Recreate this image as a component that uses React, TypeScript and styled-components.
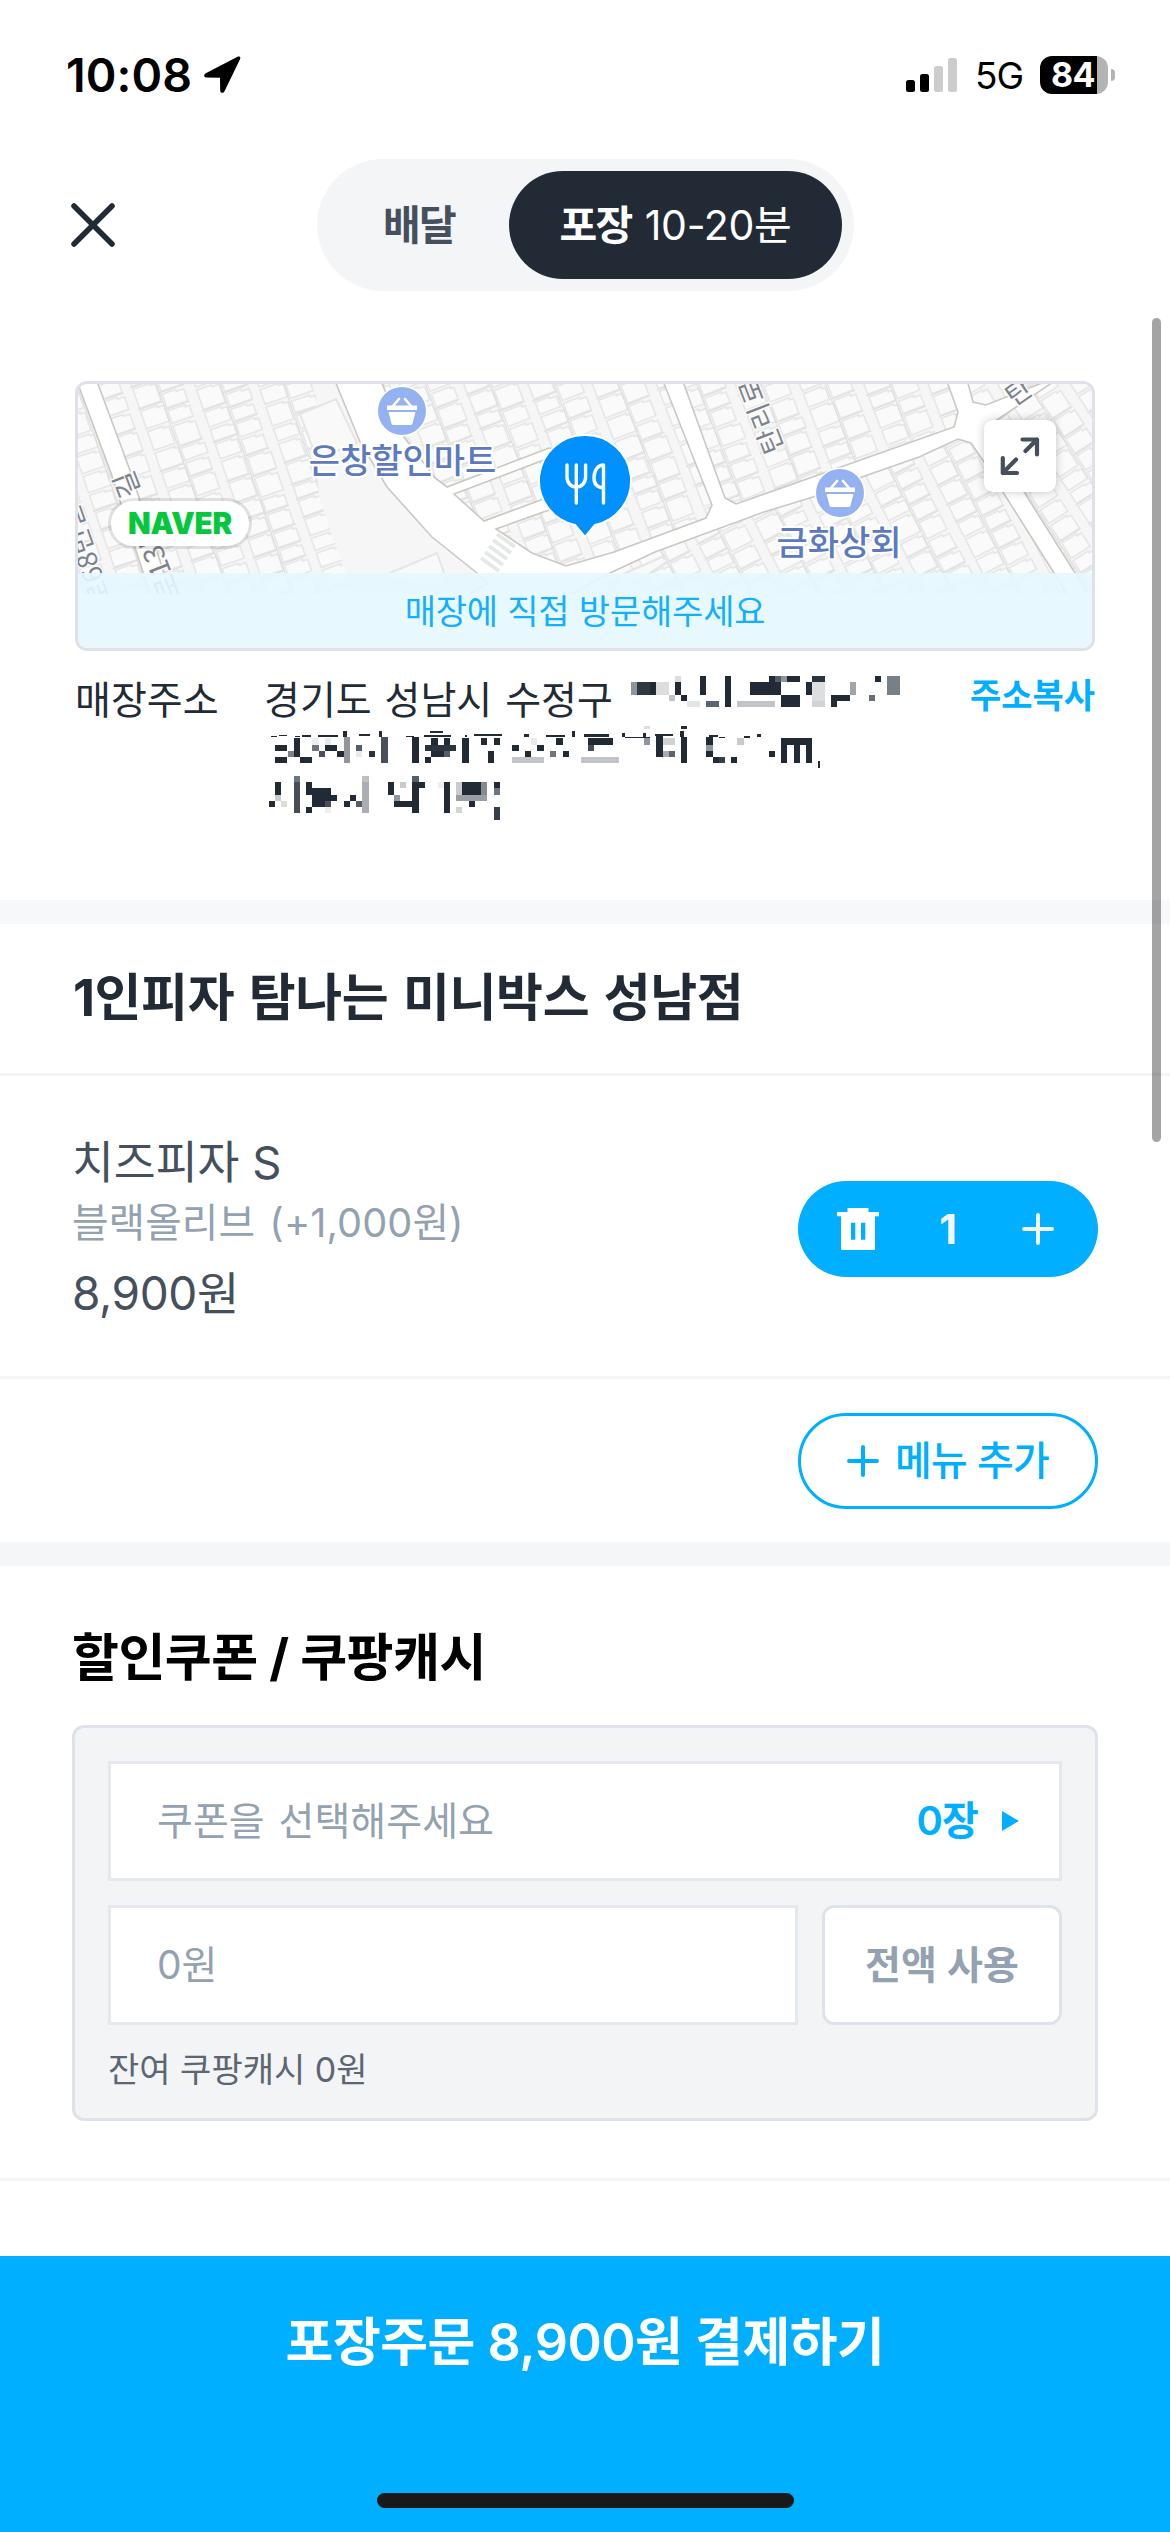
import React from 'react';
import styled, { createGlobalStyle, css } from 'styled-components';

const sky = '#00afff';
const ink = '#222b35';
const slate = '#464f5c';
const muted = '#93a1b0';

const GlobalStyle = createGlobalStyle`
  * { box-sizing: border-box; }
  body {
    margin: 0;
    background: #fff;
    font-family: Inter, "Noto Sans CJK KR", sans-serif;
    color: ${ink};
  }
  button { font-family: inherit; margin: 0; padding: 0; border: 0; background: none; color: inherit; }
  h2, p { margin: 0; }
  svg { display: block; flex: none; }
`;

const Screen = styled.main`
  position: relative;
  display: flex;
  flex-direction: column;
  width: 1170px;
  height: 2532px;
  overflow: hidden;
  background: #fff;
`;

const StatusBar = styled.div`
  display: flex;
  align-items: center;
  justify-content: space-between;
  height: 149px;
  padding: 0 55px 0 66px;
  color: #000;
`;

const StatusGroup = styled.div<{ $gap: number }>`
  display: flex;
  align-items: center;
  gap: ${p => p.$gap}px;
`;

const Clock = styled.span`
  font-size: 46.5px;
  font-weight: 600;
  line-height: 60px;
  letter-spacing: 0.1px;
`;

const Network = styled.span`
  font-size: 37px;
  line-height: 44px;
  letter-spacing: -1px;
  padding-top: 3px;
`;

const Battery = styled.div`
  display: flex;
  align-items: center;
  gap: 3px;
`;

const BatteryBody = styled.div`
  width: 68px;
  height: 38px;
  padding-right: 11px;
  border-radius: 12px;
  background: linear-gradient(to right, #000 57px, #b3b3b3 57px);
  color: #fff;
  font-size: 34px;
  font-weight: 700;
  line-height: 37px;
  letter-spacing: -0.6px;
  text-align: center;
  padding-left: 9px;
`;

const BatteryNub = styled.div`
  width: 4px;
  height: 12px;
  border-radius: 0 4px 4px 0;
  background: #b3b3b3;
`;

const Header = styled.header`
  display: grid;
  grid-template-columns: 317px 537px 1fr;
  align-items: center;
  height: 152px;
`;

const CloseButton = styled.button`
  padding-left: 70px;
`;

const Segmented = styled.div`
  display: flex;
  height: 132px;
  padding: 12px;
  border-radius: 66px;
  background: #f3f5f7;
`;

const Segment = styled.button<{ $active?: boolean }>`
  display: flex;
  align-items: center;
  justify-content: center;
  gap: 13px;
  width: ${p => (p.$active ? 333 : 180)}px;
  padding-bottom: 1px;
  border-radius: 54px;
  font-size: 41px;
  font-weight: 700;
  line-height: 60px;
  letter-spacing: -1.6px;
  color: ${p => (p.$active ? '#fff' : slate)};
  ${p => p.$active && css`background: ${ink};`}
`;

const Eta = styled.span`
  font-weight: 400;
  letter-spacing: -0.3px;
`;

const Pickup = styled.section`
  height: 599px;
  padding: 80px 75px 0;
`;

const MapCard = styled.div`
  position: relative;
  display: flex;
  flex-direction: column;
  justify-content: flex-end;
  height: 270px;
  border: 3px solid #dee2e8;
  border-radius: 12px;
  overflow: hidden;
  background: #fff;
`;

const MapCanvas = styled.svg`
  position: absolute;
  top: 0;
  left: 0;
`;

const MapNotice = styled.p`
  position: relative;
  height: 75px;
  background: rgba(230, 247, 255, 0.9);
  color: #13b0ff;
  font-size: 34px;
  line-height: 78px;
  letter-spacing: -0.2px;
  text-align: center;
`;

const NaverBadge = styled.div`
  position: absolute;
  left: 30px;
  top: 114px;
  width: 144px;
  height: 51px;
  border: 3px solid rgba(0, 0, 0, 0.1);
  border-radius: 26px;
  background: #fff;
  background-clip: padding-box;
  color: #03c83c;
  font-size: 29.5px;
  font-weight: 900;
  line-height: 45px;
  letter-spacing: -0.2px;
  text-align: center;
`;

const ExpandButton = styled.button`
  position: absolute;
  left: 906px;
  top: 36px;
  display: grid;
  place-items: center;
  width: 72px;
  height: 72px;
  border-radius: 9px;
  background: #fff;
  box-shadow: 0 0 10px rgba(0, 0, 0, 0.22);
`;

const AddressRow = styled.div`
  position: relative;
  display: grid;
  grid-template-columns: 189px 1fr auto;
  padding-top: 24px;
  font-size: 39px;
  line-height: 50px;
  word-spacing: 2px;
`;

const CopyButton = styled.button`
  height: 42px;
  color: ${sky};
  font-size: 34px;
  font-weight: 700;
  line-height: 42px;
`;

const Mosaic = styled.svg`
  position: absolute;
  left: -75px;
  top: -1px;
`;

const Band = styled.div<{ $tone: string }>`
  height: 24px;
  background: ${p => p.$tone};
`;

const Rule = styled.div`
  height: 3px;
  background: #f4f5f7;
`;

const StoreName = styled.h2`
  height: 149px;
  padding-left: 73px;
  font-size: 51px;
  font-weight: 700;
  line-height: 147px;
  letter-spacing: -0.4px;
  word-spacing: 3px;
`;

const CartItem = styled.section`
  display: flex;
  justify-content: space-between;
  height: 300px;
  padding: 57px 72px 0 72px;
`;

const ItemText = styled.div`
  display: flex;
  flex-direction: column;
  color: ${slate};
  line-height: 60px;
`;

const ItemName = styled.p`
  font-size: 45.5px;
`;

const ItemOption = styled.p`
  margin: 0 0 10px;
  font-size: 39.7px;
  letter-spacing: 0.1px;
  word-spacing: 3px;
  color: ${muted};
`;

const ItemPrice = styled.p`
  font-size: 46px;
  letter-spacing: -0.4px;
`;

const Stepper = styled.div`
  display: grid;
  grid-template-columns: 120px 60px 120px;
  align-items: center;
  justify-items: center;
  width: 300px;
  height: 96px;
  margin-top: 48px;
  border-radius: 48px;
  background: ${sky};
  color: #f3f5f8;
  font-size: 41px;
  font-weight: 700;
`;

const AddRow = styled.div`
  display: flex;
  justify-content: flex-end;
  height: 163px;
  padding: 34px 72px 0 0;
`;

const AddButton = styled.button`
  display: flex;
  align-items: center;
  justify-content: center;
  gap: 16px;
  width: 300px;
  height: 96px;
  border: 3px solid ${sky};
  border-radius: 48px;
  color: ${sky};
  font-size: 40px;
  font-weight: 500;
  line-height: 60px;
  letter-spacing: -0.8px;
`;

const Coupons = styled.section`
  height: 612px;
  padding: 56px 72px 0;
`;

const CouponTitle = styled.h2`
  margin-bottom: 31px;
  color: #000;
  font-size: 51px;
  font-weight: 700;
  line-height: 72px;
  letter-spacing: -0.5px;
`;

const CouponPanel = styled.div`
  display: grid;
  grid-template-columns: 1fr 240px;
  grid-template-rows: 120px 120px 44px;
  gap: 24px;
  height: 396px;
  padding: 33px;
  border: 3px solid #dfe2e8;
  border-radius: 12px;
  background: #f3f4f6;
`;

const Field = styled.div<{ $wide?: boolean }>`
  display: flex;
  align-items: center;
  justify-content: space-between;
  grid-column: ${p => (p.$wide ? '1 / -1' : 'auto')};
  padding: 0 40px 0 46px;
  border: 3px solid #e5e8ed;
  background: #fff;
  color: ${muted};
  font-size: 39px;
  line-height: 60px;
  word-spacing: 3px;
`;

const CouponCount = styled.span`
  display: flex;
  align-items: center;
  gap: 24px;
  color: ${sky};
  font-size: 40px;
  font-weight: 600;
  letter-spacing: -0.8px;
`;

const UseAll = styled.button`
  border: 3px solid #dfe2e8;
  border-radius: 12px;
  background: #fff;
  color: ${muted};
  font-size: 39px;
  font-weight: 700;
  line-height: 60px;
  word-spacing: 1px;
`;

const Balance = styled.p`
  margin-top: -1px;
  color: #5c6673;
  font-size: 34px;
  line-height: 44px;
`;

const PayBar = styled.footer`
  display: flex;
  flex-direction: column;
  align-items: center;
  height: 276px;
  margin-top: auto;
  padding-top: 51px;
  background: ${sky};
`;

const PayButton = styled.button`
  color: #fff;
  font-size: 52px;
  font-weight: 600;
  line-height: 72px;
  letter-spacing: -0.5px;
`;

const HomeIndicator = styled.div`
  width: 417px;
  height: 15px;
  margin-top: 114px;
  border-radius: 8px;
  background: #191919;
`;

const ScrollThumb = styled.div`
  position: absolute;
  left: 1152px;
  top: 318px;
  width: 9px;
  height: 824px;
  border-radius: 5px;
  background: rgba(0, 0, 0, 0.355);
`;

/* Map geometry: coordinates share one 1014 x 210 window starting at 78,384 */
interface Block {
  id: string;
  outline: string;
  lots?: string;
  angle: number;
}

const blocks: Block[] = [
  { id: 'west', outline: '70,376 78,384 111,473 150,594 150,600 70,600', angle: -19 },
  {
    id: 'midwest',
    outline: '95,376 131,473 171,594 171,600 460,600 488,583 477,573 432,537 387,487 360,442 333,376',
    lots: '97,376 318,376 312,440 320,500 346,573 350,594 171,600',
    angle: -19,
  },
  {
    id: 'centre',
    outline:
      '379,376 404,437 435,478 447,487 549,448 570,450 549,458 454,494 484,521 549,497 570,490 549,510 496,529 532,553 566,566 614,552 706,518 712,505 661,376',
    angle: -21,
  },
  { id: 'north', outline: '681,376 725,498 736,504 954,427 958,412 945,376', angle: -21 },
  { id: 'corner', outline: '966,376 973,402 986,405 1060,376', angle: -30 },
  { id: 'south', outline: '560,600 610,573 655,552 764,512 813,497 862,477 919,457 958,439 971,443 984,462 1054,573 1070,600', angle: -27 },
  { id: 'east', outline: '994,422 1062,376 1100,376 1100,600 1092,600 1024,492', angle: -33 },
];

function lotPaths(seed: number): { lots: string; seams: string } {
  let s = seed;
  const rnd = () => {
    s = (s * 16807) % 2147483647;
    return s / 2147483647;
  };
  let lots = '';
  let seams = '';
  for (let x = -420; x < 420; x += 60) {
    for (let side = 0; side < 2; side += 1) {
      const left = x + side * 26;
      let y = -420 + rnd() * 12;
      while (y < 420) {
        const h = 15 + rnd() * 9;
        const w = 22 + rnd() * 2.5;
        const notch = 3 + rnd() * 5;
        lots += `M${left + 1} ${y + 1}h${w - notch}v2h${notch}v${h - 5}h${-w}z`;
        if (rnd() > 0.45) seams += `M${left - 1} ${y - 1}h26`;
        y += h;
      }
    }
    seams += `M${x + 25} -420v840`;
  }
  return { lots, seams };
}

function Basket({ x, y }: { x: number; y: number }) {
  return (
    <g transform={`translate(${x} ${y})`}>
      <circle r="25.5" fill="#fff" />
      <circle r="24" fill="#94b1f1" />
      <path d="M-15-5.500h30v4.500h-30zM-13.500 1h27l-3 11.500q-.4 1.500-2 1.500h-17q-1.600 0-2-1.500z" fill="#fff" />
      <path d="M-9-5l6-7M9-5l-6-7" stroke="#fff" strokeWidth="2.600" fill="none" strokeLinecap="round" />
    </g>
  );
}

function StreetMap() {
  return (
    <MapCanvas width="1014" height="210" viewBox="78 384 1014 210" fontFamily='"Noto Sans CJK KR", sans-serif'>
      {blocks.map((b, i) => {
        const { lots, seams } = lotPaths(97 + i * 531);
        const [cx, cy] = [[90, 500], [230, 490], [560, 470], [820, 440], [1000, 390], [830, 540], [1060, 480]][i];
        return (
          <g key={b.id}>
            <clipPath id={b.id}>
              <polygon points={b.lots || b.outline} />
            </clipPath>
            <polygon points={b.outline} fill="#f6f6f6" />
            <g clipPath={`url(#${b.id})`}>
              <g transform={`translate(${cx} ${cy}) rotate(${b.angle})`}>
                <path d={lots} fill="#fafafa" stroke="#e7e7e7" strokeWidth="1.700" />
                <path d={seams} fill="none" stroke="#dcdcdc" strokeWidth="0.900" />
              </g>
            </g>
            <polygon points={b.outline} fill="none" stroke="#cbc8c0" strokeWidth="1.600" />
          </g>
        );
      })}
      <path d="M300 414l36-15 21 44-40 16zM383 576l54-23 12 34M614 578l48-21 6 4-36 24" fill="#f9f9f9" stroke="#e5e5e5" strokeWidth="2" />
      <path d="M497 534l18 13M493 540l18 13M489 546l18 13M485 552l18 13M481 558l18 13" stroke="#e4e8e7" strokeWidth="4" />

      <g fill="#7d838b" stroke="#fafafa" strokeWidth="3" paintOrder="stroke" fontSize="27">
        <text transform="translate(784 449) rotate(-111)" letterSpacing="2">탄리로</text>
        <text transform="translate(181 596) rotate(-111)" fontSize="28">로13번</text>
        <text transform="translate(141 493) rotate(-111)" fontSize="28">길</text>
        <text transform="translate(112 602) rotate(-109)">로68번길</text>
        <text transform="translate(1014 407) rotate(-35)">탄</text>
      </g>

      <g fill="#5c7abf" stroke="#fff" strokeWidth="4" paintOrder="stroke" fontSize="34" fontWeight="500" textAnchor="middle">
        <text x="402.500" y="473">은창할인마트</text>
        <text x="839" y="555">금화상회</text>
      </g>
      <Basket x={402} y={411} />
      <Basket x={840} y={493} />

      <path d="M585 435a45.500 45.500 0 0 1 10 90L585 537l-10-12a45.500 45.500 0 0 1 10-90z" fill="#0091ff" stroke="#fff" strokeWidth="2" />
      <g stroke="#fff" strokeWidth="3.400" fill="none" strokeLinecap="round" strokeLinejoin="round">
        <path d="M567 465v12c0 6 4 10 9.300 10s9.300-4 9.300-10v-12M576.300 465v38" />
        <path d="M603.500 503v-38c-6 0-9.500 6-9.500 13 0 6 3.500 9.500 9.500 10" />
      </g>
    </MapCanvas>
  );
}

/* Pixelated redaction over the private part of the address: x, y, w, h, tone */
type Cell = [number, number, number, number, string?];

const leftCells: Cell[] = [
  [592, 257, 15, 4], [612, 255, 24, 4], [657, 257, 15, 4], [678, 255, 26, 5], [722, 255, 55, 5], [793, 243, 10, 19],
  [837, 251, 30, 6], [892, 243, 10, 19], [970, 258, 20, 4], [1037, 244, 34, 6], [1020, 256, 75, 6], [1133, 254, 7, 8],
  [1160, 251, 77, 6], [1300, 253, 12, 9], [1360, 255, 55, 6], [1433, 243, 8, 19], [1468, 253, 70, 8],
  [602, 285, 34, 18], [655, 264, 17, 57], [672, 321, 34, 18], [602, 321, 34, 18], [637, 303, 18, 18, '#7c8088'],
  [706, 264, 18, 21, '#eee'], [742, 264, 17, 21, '#e8ebeb'], [706, 285, 18, 18, '#6f757d'], [724, 303, 18, 18, '#4a515b'],
  [742, 285, 34, 18], [776, 303, 19, 18], [795, 262, 17, 77, '#91979d'], [829, 285, 17, 18, '#555d66'],
  [829, 303, 17, 18, '#e8eaeb'], [865, 303, 17, 18, '#2c353f'], [899, 262, 19, 77, '#4a515b'], [986, 262, 19, 77],
  [1022, 285, 87, 18, '#2c353f'], [1039, 264, 18, 21], [1074, 264, 18, 21], [1039, 303, 36, 18], [1075, 303, 17, 18, '#555d66'],
  [1022, 321, 17, 18], [1126, 264, 19, 75], [1179, 264, 17, 21], [1215, 264, 17, 21], [1197, 303, 18, 36],
  [1319, 264, 17, 21, '#e8eaeb'], [1266, 285, 19, 18], [1336, 285, 19, 18], [1302, 303, 17, 18], [1266, 321, 89, 18, '#c0c4c8'],
  [1389, 264, 19, 21], [1372, 303, 17, 18, '#6f757d'], [1408, 303, 17, 18], [1478, 264, 70, 21], [1478, 285, 17, 18, '#464f59'],
  [1459, 321, 106, 18, '#c0c4c8'],
  [585, 453, 17, 18], [602, 396, 17, 39], [602, 435, 17, 18, '#ccc'], [619, 453, 17, 18, '#ddd'], [655, 378, 17, 18, '#6f757d'],
  [655, 396, 17, 93, '#464f59'], [689, 396, 17, 39], [706, 414, 53, 39], [759, 435, 17, 18], [706, 453, 36, 18],
  [742, 453, 17, 18, '#464f59'], [689, 471, 17, 18], [742, 471, 17, 18, '#eee'], [795, 453, 18, 18], [812, 435, 17, 18],
  [829, 453, 17, 18, '#555d66'], [846, 378, 19, 18, '#bcc0c4'], [846, 396, 19, 93, '#aaaeb3'], [918, 396, 17, 39],
  [935, 435, 17, 18, '#91979d'], [952, 396, 17, 18, '#c8cacc'], [935, 453, 70, 18], [986, 378, 19, 18, '#555d66'],
  [986, 396, 19, 93], [1005, 396, 17, 18], [1057, 396, 17, 18, '#eee'], [1075, 396, 17, 93], [1109, 396, 17, 39, '#c8cacc'],
  [1126, 396, 53, 39], [1179, 396, 17, 39, '#858b93'], [1109, 435, 87, 18, '#999fa5'], [1145, 453, 17, 18],
  [1109, 471, 17, 18, '#d3d4d5'], [1215, 396, 17, 18], [1215, 414, 17, 21, '#6f757d'], [1215, 471, 17, 39, '#363f49'],
];

const rightCells: Cell[] = [
  [85, 96, 17, 39, '#8f959b'], [102, 96, 36, 39, '#303942'], [138, 96, 16, 39], [154, 96, 36, 39, '#ddd'], [206, 78, 17, 18, '#ddd'],
  [206, 96, 17, 39], [190, 135, 16, 18, '#c0c4c8'], [223, 135, 16, 18], [239, 153, 36, 18, '#e2e4e5'], [275, 78, 17, 57],
  [292, 153, 35, 18, '#5c646d'], [344, 78, 16, 93], [413, 96, 85, 39], [377, 153, 104, 18, '#c0c4c8'], [465, 78, 16, 18],
  [481, 78, 17, 18, '#555d66'], [498, 78, 16, 18, '#8f959b'], [514, 78, 36, 18], [498, 135, 52, 36], [567, 96, 16, 39],
  [583, 78, 36, 18, '#2c353f'], [583, 96, 36, 57, '#dddedf'], [583, 153, 36, 18, '#d0d2d4'], [688, 96, 16, 39, '#9fa5aa'],
  [635, 135, 53, 18], [635, 153, 17, 18], [756, 78, 17, 18], [740, 135, 16, 18, '#666e78'], [790, 78, 35, 57, '#777f87'],
  [0, 264, 36, 21], [0, 321, 52, 18, '#c0c4c8'], [121, 228, 17, 9, '#ddd'], [121, 264, 17, 21, '#8f959b'], [152, 252, 48, 6],
  [154, 258, 19, 63], [173, 264, 33, 21, '#d0d2d4'], [173, 303, 17, 18, '#aaa'], [190, 303, 16, 18, '#5c646d'],
  [223, 228, 16, 9], [223, 262, 16, 77], [221, 243, 9, 19], [60, 248, 8, 13], [70, 261, 68, 3], [119, 248, 8, 13],
  [292, 262, 19, 23], [292, 285, 19, 18, '#8f959b'], [292, 303, 19, 18], [311, 321, 16, 18], [327, 321, 17, 18, '#363f49'],
  [360, 321, 17, 18], [300, 255, 25, 6], [327, 261, 17, 3], [377, 264, 19, 21, '#c8cacc'], [396, 257, 16, 6], [433, 252, 10, 9],
  [465, 303, 16, 18], [498, 264, 85, 21], [498, 285, 16, 54], [534, 285, 16, 54], [567, 285, 16, 54], [600, 333, 5, 22],
];

function Cells({ data }: { data: Cell[] }) {
  return (
    <>
      {data.map(([x, y, w, h, tone], i) => (
        <rect key={i} x={x} y={y} width={w} height={h} fill={tone || ink} />
      ))}
    </>
  );
}

function Plus() {
  return (
    <svg width="32" height="32" viewBox="0 0 32 32">
      <path d="M16 2v28M2 16h28" stroke="currentColor" strokeWidth="4" strokeLinecap="round" />
    </svg>
  );
}

export default function App() {
  return (
    <>
      <GlobalStyle />
      <Screen>
        <StatusBar>
          <StatusGroup $gap={12}>
            <Clock>10:08</Clock>
            <svg width="37" height="37" viewBox="0 0 37 37">
              <path d="M33.500.800L1.800 17.200c-2.600 1.400-2 4.300.900 4.300L16 21.700l.2 12.800c0 2.700 3.200 3.200 4.300.8L36 3.200C37 1 35.500-.200 33.500.800z" fill="#000" />
            </svg>
          </StatusGroup>
          <StatusGroup $gap={17}>
            <svg width="52" height="36" viewBox="0 0 52 36">
              <rect x="0" y="23" width="9" height="12" rx="2.500" />
              <rect x="14" y="17" width="9" height="18" rx="2.500" />
              <rect x="28" y="9" width="9" height="26" rx="2.500" fill="#ccc" />
              <rect x="42" y="1" width="9" height="34" rx="2.500" fill="#ccc" />
            </svg>
            <Network>5G</Network>
            <Battery>
              <BatteryBody>84</BatteryBody>
              <BatteryNub />
            </Battery>
          </StatusGroup>
        </StatusBar>

        <Header>
          <CloseButton aria-label="닫기">
            <svg width="46" height="46" viewBox="0 0 46 46">
              <path d="M4 4l38 38M42 4L4 42" stroke={ink} strokeWidth="5.500" strokeLinecap="round" />
            </svg>
          </CloseButton>
          <Segmented>
            <Segment>배달</Segment>
            <Segment $active>
              포장 <Eta>10-20분</Eta>
            </Segment>
          </Segmented>
        </Header>

        <Pickup>
          <MapCard>
            <StreetMap />
            <NaverBadge>NAVER</NaverBadge>
            <ExpandButton aria-label="지도 확대">
              <svg width="40" height="40" viewBox="0 0 40 40" fill="none" stroke={slate} strokeWidth="4.200" strokeLinecap="round" strokeLinejoin="round">
                <path d="M22.500 3.500h14.500v15M37 3.500L25.500 15M17 37H2.800V22M2.800 37L16 23.500" />
              </svg>
            </ExpandButton>
            <MapNotice>매장에 직접 방문해주세요</MapNotice>
          </MapCard>
          <AddressRow>
            <span>매장주소</span>
            <span>경기도 성남시 수정구</span>
            <CopyButton>주소복사</CopyButton>
            <Mosaic width="1170" height="200" viewBox="0 650 1170 200" shapeRendering="crispEdges">
              <g transform="translate(60 650) scale(0.357143 0.333333)">
                <Cells data={leftCells} />
              </g>
              <g transform="translate(600 650) scale(0.363500 0.333333)">
                <Cells data={rightCells} />
              </g>
            </Mosaic>
          </AddressRow>
        </Pickup>

        <Band $tone="#f7f8fa" />
        <StoreName>1인피자 탐나는 미니박스 성남점</StoreName>
        <Rule />

        <CartItem>
          <ItemText>
            <ItemName>치즈피자 S</ItemName>
            <ItemOption>블랙올리브 (+1,000원)</ItemOption>
            <ItemPrice>8,900원</ItemPrice>
          </ItemText>
          <Stepper>
            <svg width="42" height="42" viewBox="0 0 42 42" fill="#fff">
              <path
                fillRule="evenodd"
                d="M10.500 0h21v4H42v4.300h-4V41q0 1-1 1H5q-1 0-1-1V8.300H0V4h10.500zM14 14.700v17h4.300v-17zM24 14.700v17h4.300v-17z"
              />
            </svg>
            <span>1</span>
            <Plus />
          </Stepper>
        </CartItem>
        <Rule />

        <AddRow>
          <AddButton>
            <Plus />
            메뉴 추가
          </AddButton>
        </AddRow>
        <Band $tone="#f4f6f8" />

        <Coupons>
          <CouponTitle>할인쿠폰 / 쿠팡캐시</CouponTitle>
          <CouponPanel>
            <Field $wide>
              쿠폰을 선택해주세요
              <CouponCount>
                0장
                <svg width="17" height="20" viewBox="0 0 17 20">
                  <path d="M0 0l17 10L0 20z" fill={sky} />
                </svg>
              </CouponCount>
            </Field>
            <Field>0원</Field>
            <UseAll>전액 사용</UseAll>
            <Balance>잔여 쿠팡캐시 0원</Balance>
          </CouponPanel>
        </Coupons>
        <Rule />

        <PayBar>
          <PayButton>포장주문 8,900원 결제하기</PayButton>
          <HomeIndicator />
        </PayBar>
        <ScrollThumb />
      </Screen>
    </>
  );
}
